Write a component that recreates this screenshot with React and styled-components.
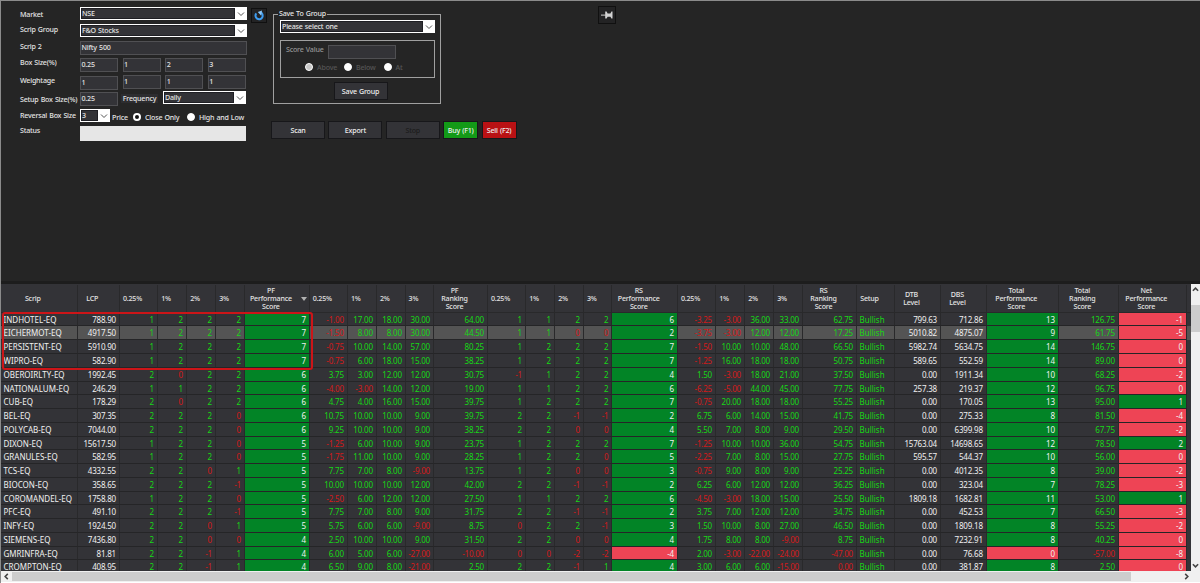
import React, { useState } from 'react';
import styled, { createGlobalStyle } from 'styled-components';

const GlobalStyle = createGlobalStyle`
    *{ box-sizing:border-box; }
    body{
        margin:0;
        background:#252525;
        font-family:"Noto Sans","Open Sans",sans-serif;
        font-size:7.1px;
        font-weight:500;
        letter-spacing:-0.2px;
        word-spacing:0.5px;
        line-height:12px;
        color:#e4e4e4;
        overflow:hidden;
    }
`;
const Window = styled.div`
    width:1200px;
    height:583px;
    display:flex;
    flex-direction:column;
    border-top:1px solid #8b8b8b;
    border-left:1px solid #8b8b8b;
    background:#252525;
    overflow:hidden;
`;
const TopPanel = styled.div`
    height:280px;
    display:flex;
    align-items:flex-start;
    padding-left:19px;
`;
const Form = styled.div`
    width:227px;
    padding-top:6px;
`;
const Line = styled.div`
    display:flex;
    align-items:flex-start;
    height:${p => p.$h || 17}px;
`;
const Label = styled.div`
    width:60px;
    flex:none;
    white-space:nowrap;
    margin-top:${p => p.$shift || 0}px;
`;
const Input = styled.div`
    width:${p => p.$w}px;
    height:14px;
    flex:none;
    margin-top:${p => p.$shift || 0}px;
    margin-right:${p => p.$gap || 0}px;
    padding-left:0.5px;
    line-height:10.5px;
    background:#333337;
    border:1px solid #505053;
`;
const ComboBox = styled.div`
    width:${p => p.$w}px;
    height:13px;
    flex:none;
    display:flex;
    padding:1px;
    background:#fff;
`;
const ComboText = styled.div`
    flex:1;
    line-height:9px;
    background:#333337;
    border:1px solid #1f1f24;
    white-space:nowrap;
`;
const ComboArrow = styled.div`
    width:11px;
    display:flex;
    align-items:center;
    justify-content:center;
`;
const FrequencyLabel = styled.div`
    width:37px;
    height:9px;
    margin:3px 5px 0 3px;
    line-height:9px;
    text-align:center;
    background:#2d2d30;
`;
const PriceRow = styled.div`
    display:flex;
    align-items:center;
    height:12px;
    margin-top:2px;
    padding-left:2px;
    white-space:nowrap;
`;
const PriceText = styled.span`
    width:21px;
`;
const Radio = styled.span`
    width:8px;
    height:8px;
    flex:none;
    border-radius:50%;
    border:${p => p.$checked ? 2 : 1}px solid #fff;
    background:${p => p.$fill || '#fff'};
`;
const RadioText = styled.span`
    width:${p => p.$w}px;
    padding-left:4px;
    color:${p => p.$dim ? '#555' : '#e4e4e4'};
`;
const StatusBar = styled.div`
    width:166px;
    height:15px;
    background:#e6e6e6;
`;
const IconButton = styled.button`
    width:${p => p.$w}px;
    height:${p => p.$h}px;
    margin:${p => p.$margin};
    padding:0;
    display:flex;
    align-items:center;
    justify-content:center;
    background:#232324;
    border:1px solid #101010;
`;
const Middle = styled.div`
    width:327px;
    padding-top:7px;
`;
const GroupBox = styled.fieldset`
    width:168px;
    height:96px;
    margin:0 0 0 2px;
    padding:0 6px;
    border:1px solid #a0a0a0;
    min-width:0;
`;
const Legend = styled.legend`
    height:12px;
    margin-left:-2px;
    padding:0 1px;
    line-height:11px;
    white-space:nowrap;
`;
const ScoreBox = styled.div`
    width:155px;
    height:38px;
    margin-top:7px;
    padding:4px 0 0 5px;
    border:1px solid #a0a0a0;
    color:#969696;
`;
const ScoreLine = styled.div`
    display:flex;
    line-height:9px;
`;
const ScoreLabel = styled.span`
    width:42px;
`;
const RadioLine = styled.div`
    display:flex;
    align-items:center;
    height:12px;
    margin-top:2px;
    padding-left:19px;
`;
const Button = styled.button`
    width:${p => p.$w || 54}px;
    height:18px;
    padding:0;
    font:inherit;
    letter-spacing:inherit;
    word-spacing:inherit;
    line-height:13px;
    color:${p => p.disabled ? '#1c1c1c' : '#f0f0f0'};
    background:${p => p.$color || '#333337'};
    border:1px solid #17171a;
`;
const SaveButton = styled(Button)`
    display:block;
    margin:4px 0 0 53.5px;
`;
const Actions = styled.div`
    display:flex;
    gap:3.4px;
    margin-top:17px;
`;

const TablePanel = styled.div`
    height:290px;
    display:flex;
    position:relative;
    background:#333337;
    border-top:3px solid #1d1d1d;
`;
const Table = styled.div`
    width:1190px;
    height:287px;
    overflow:hidden;
`;
const columns = '76.5px 42.5px 38px 29px 29px 29px 64.8px 38px 29px 29px 28.2px 54px 38px 29px 29px 28.5px 65.5px 38px 29px 29px 29px 54px 38px 46px 45.8px 72px 60px 68px 4.5px';
const Header = styled.div`
    display:grid;
    grid-template-columns:${columns};
    height:28.7px;
    padding-top:1px;
    border-bottom:1px solid #29292b;
`;
const HeaderCell = styled.div`
    display:flex;
    align-items:center;
    justify-content:center;
    position:relative;
    padding-right:12px;
    line-height:8.2px;
    text-align:center;
    white-space:pre;
    border-right:1px solid #29292b;
`;
const SortArrow = styled.svg`
    position:absolute;
    right:2px;
    top:12px;
`;
const Row = styled.div`
    display:grid;
    grid-template-columns:${columns};
    grid-template-rows:13.77px;
    height:13.77px;
    background:${p => p.$selected ? '#545454' : '#333337'};
`;
const tones = {
    up:'#16d816',
    down:'#d41a1a',
    plain:'#f0f0f0',
};
const fills = {
    green:'#028426',
    red:'#ee4455',
};
const Cell = styled.div`
    padding:0 3px 0 ${p => p.$left ? 2.5 : 0}px;
    font-size:8px;
    font-weight:400;
    letter-spacing:${p => p.$left ? 0 : -0.2}px;
    line-height:14px;
    text-align:${p => p.$left ? 'left' : 'right'};
    color:${p => tones[p.$tone]};
    background:${p => fills[p.$fill] || 'transparent'};
    border-right:1px solid #29292b;
    border-bottom:1px solid #252527;
    white-space:nowrap;
`;
const Highlight = styled.div`
    position:absolute;
    left:1px;
    top:28px;
    width:311px;
    height:58px;
    border:2px solid #cc1518;
    border-radius:3px;
`;
const VerticalBar = styled.div`
    width:9px;
    height:287px;
    display:flex;
    flex-direction:column;
    align-items:center;
    padding:2px 0;
    background:#f0f0f0;
`;
const VerticalThumb = styled.div`
    width:9px;
    height:27px;
    margin-top:12px;
    margin-bottom:auto;
    background:#cdcdcd;
`;
const HorizontalBar = styled.div`
    height:12px;
    display:flex;
    align-items:center;
    padding:0 10px 0 2px;
    background:#f0f0f0;
    border-bottom:1px solid #fff;
`;
const HorizontalThumb = styled.div`
    width:1119px;
    height:9px;
    margin-left:2px;
    margin-right:auto;
    background:#cdcdcd;
`;

const chevrons = {
    down:'M1 2.5 L4 5.5 L7 2.5',
    up:'M1 5.5 L4 2.5 L7 5.5',
    left:'M5.5 1 L2.5 4 L5.5 7',
    right:'M2.5 1 L5.5 4 L2.5 7',
};
const Chevron = ({dir,size=7,color='#444',weight=1.8}) => (
    <svg width={size} height={size} viewBox="0 0 8 8" fill="none" stroke={color} strokeWidth={weight}>
        <path d={chevrons[dir]}/>
    </svg>
);

const Combo = ({width,children}) => (
    <ComboBox $w={width}>
        <ComboText>{children}</ComboText>
        <ComboArrow><Chevron dir="down" size={8} color="#555" weight={1}/></ComboArrow>
    </ComboBox>
);

const headers = [
    'Scrip','LCP','0.25%','1%','2%','3%','PF\nPerformance\nScore',
    '0.25%','1%','2%','3%','PF\nRanking\nScore',
    '0.25%','1%','2%','3%','RS\nPerformance\nScore',
    '0.25%','1%','2%','3%','RS\nRanking\nScore',
    'Setup','DTB\nLevel','DBS\nLevel','Total\nPerformance\nScore','Total\nRanking\nScore','Net\nPerformance\nScore','',
];

const rows = `INDHOTEL-EQ 788.90 1 2 2 2 7 -1.00 17.00 18.00 30.00 64.00 1 1 2 2 6 -3.25 -3.00 36.00 33.00 62.75 Bullish 799.63 712.86 13 126.75 -1
EICHERMOT-EQ 4917.50 1 2 2 2 7 -1.50 8.00 8.00 30.00 44.50 1 1 0 0 2 -3.75 -3.00 12.00 12.00 17.25 Bullish 5010.82 4875.07 9 61.75 -5
PERSISTENT-EQ 5910.90 1 2 2 2 7 -0.75 10.00 14.00 57.00 80.25 1 2 2 2 7 -1.50 10.00 10.00 48.00 66.50 Bullish 5982.74 5634.75 14 146.75 0
WIPRO-EQ 582.90 1 2 2 2 7 -0.75 6.00 18.00 15.00 38.25 1 2 2 2 7 -1.25 16.00 18.00 18.00 50.75 Bullish 589.65 552.59 14 89.00 0
OBEROIRLTY-EQ 1992.45 2 0 2 2 6 3.75 3.00 12.00 12.00 30.75 -1 1 2 2 4 1.50 -3.00 18.00 21.00 37.50 Bullish 0.00 1911.34 10 68.25 -2
NATIONALUM-EQ 246.29 1 1 2 2 6 -4.00 -3.00 14.00 12.00 19.00 1 1 2 2 6 -6.25 -5.00 44.00 45.00 77.75 Bullish 257.38 219.37 12 96.75 0
CUB-EQ 178.29 2 0 2 2 6 4.75 4.00 16.00 15.00 39.75 1 2 2 2 7 -0.75 20.00 18.00 18.00 55.25 Bullish 0.00 170.05 13 95.00 1
BEL-EQ 307.35 2 2 2 0 6 10.75 10.00 10.00 9.00 39.75 2 2 -1 -1 2 6.75 6.00 14.00 15.00 41.75 Bullish 0.00 275.33 8 81.50 -4
POLYCAB-EQ 7044.00 2 2 2 0 6 9.25 10.00 10.00 9.00 38.25 2 2 0 0 4 5.50 7.00 8.00 9.00 29.50 Bullish 0.00 6399.98 10 67.75 -2
DIXON-EQ 15617.50 1 2 2 0 5 -1.25 6.00 10.00 9.00 23.75 1 2 2 2 7 -1.25 10.00 10.00 36.00 54.75 Bullish 15763.04 14698.65 12 78.50 2
GRANULES-EQ 582.95 1 2 2 0 5 -1.75 11.00 10.00 9.00 28.25 1 2 2 0 5 -2.25 7.00 8.00 15.00 27.75 Bullish 595.57 544.37 10 56.00 0
TCS-EQ 4332.55 2 2 0 1 5 7.75 7.00 8.00 -9.00 13.75 1 2 0 0 3 -0.75 9.00 8.00 9.00 25.25 Bullish 0.00 4012.35 8 39.00 -2
BIOCON-EQ 358.65 2 2 2 -1 5 10.00 10.00 10.00 12.00 42.00 2 2 -1 -1 2 6.25 6.00 12.00 12.00 36.25 Bullish 0.00 323.04 7 78.25 -3
COROMANDEL-EQ 1758.80 1 2 2 0 5 -2.50 6.00 12.00 12.00 27.50 1 1 2 2 6 -4.50 -3.00 18.00 15.00 25.50 Bullish 1809.18 1682.81 11 53.00 1
PFC-EQ 491.10 2 2 2 -1 5 7.75 7.00 8.00 9.00 31.75 2 2 -1 -1 2 3.75 7.00 12.00 12.00 34.75 Bullish 0.00 452.53 7 66.50 -3
INFY-EQ 1924.50 2 2 0 1 5 5.75 6.00 6.00 -9.00 8.75 0 2 2 -1 3 1.50 10.00 8.00 27.00 46.50 Bullish 0.00 1809.18 8 55.25 -2
SIEMENS-EQ 7436.80 2 2 0 0 4 2.50 10.00 10.00 9.00 31.50 2 2 0 0 4 1.75 8.00 8.00 -9.00 8.75 Bullish 0.00 7232.91 8 40.25 0
GMRINFRA-EQ 81.81 2 2 -1 1 4 6.00 5.00 6.00 -27.00 -10.00 0 0 -2 -2 -4 2.00 -3.00 -22.00 -24.00 -47.00 Bullish 0.00 76.68 0 -57.00 -8
CROMPTON-EQ 408.95 2 2 -1 1 4 6.50 9.00 8.00 -21.00 2.50 2 2 -1 1 4 3.00 6.00 6.00 -15.00 0.00 Bullish 0.00 381.87 8 2.50 0`
    .split('\n').map(line => line.split(' '));

const plainColumns = [0,1,23,24];
const filledColumns = [6,16,25,27];

const ScripCell = ({value,index}) => {
    const filled = filledColumns.includes(index);
    const positive = index === 22 || Number(value) > 0;
    const tone = filled || plainColumns.includes(index) ? 'plain' : positive ? 'up' : 'down';
    const fill = filled ? (positive ? 'green' : 'red') : undefined;
    return <Cell $tone={tone} $fill={fill} $left={index === 0 || index === 22}>{value}</Cell>;
};

const ScanForm = () => (
    <Form>
        <Line><Label $shift={1}>Market</Label><Combo width={167}>NSE</Combo></Line>
        <Line><Label $shift={-1}>Scrip Group</Label><Combo width={167}>F&amp;O Stocks</Combo></Line>
        <Line><Label $shift={-1}>Scrip 2</Label><Input $w={167}>Nifty 500</Input></Line>
        <Line>
            <Label $shift={-2}>Box Size(%)</Label>
            {['0.25','1','2','3'].map(v => <Input key={v} $w={38} $gap={4.6}>{v}</Input>)}
        </Line>
        <Line $h={16}>
            <Label $shift={-1}>Weightage</Label>
            {[1,0,0,0].map((shift,i) => <Input key={i} $w={38} $gap={4.6} $shift={shift}>1</Input>)}
        </Line>
        <Line $h={18}>
            <Label $shift={2}>Setup Box Size(%)</Label>
            <Input $w={38} $shift={1}>0.25</Input>
            <FrequencyLabel>Frequency</FrequencyLabel>
            <Combo width={83}>Daily</Combo>
        </Line>
        <Line>
            <Label>Reversal Box Size</Label>
            <Combo width={30}>3</Combo>
            <PriceRow>
                <PriceText>Price</PriceText>
                <Radio $checked $fill="#111"/>
                <RadioText $w={46}>Close Only</RadioText>
                <Radio/>
                <RadioText $w={52}>High and Low</RadioText>
            </PriceRow>
        </Line>
        <Line><Label $shift={-2}>Status</Label><StatusBar/></Line>
    </Form>
);

const SaveToGroup = () => (
    <GroupBox>
        <Legend>Save To Group</Legend>
        <Combo width={155}>Please select one</Combo>
        <ScoreBox>
            <ScoreLine><ScoreLabel>Score Value</ScoreLabel><Input $w={68}/></ScoreLine>
            <RadioLine>
                <Radio $fill="#c8c8c8"/><RadioText $dim $w={31}>Above</RadioText>
                <Radio/><RadioText $dim $w={31.5}>Below</RadioText>
                <Radio/><RadioText $dim $w={20}>At</RadioText>
            </RadioLine>
        </ScoreBox>
        <SaveButton>Save Group</SaveButton>
    </GroupBox>
);

const App = () => {
    const [selected,setSelected] = useState(1);
    return (
        <Window>
            <GlobalStyle/>
            <TopPanel>
                <ScanForm/>
                <IconButton $w={16} $h={15} $margin="7px 4px 0 4px">
                    <svg width="11" height="11" viewBox="0 0 11 11">
                        <path d="M2.3 3.4 A3.6 3.6 0 1 0 6.6 2.4" fill="none" stroke="#3d9cf0" strokeWidth="2"/>
                        <path d="M8 0.4 L7.2 5.8 L3.8 2 Z" fill="#8cc8fa"/>
                    </svg>
                </IconButton>
                <Middle>
                    <SaveToGroup/>
                    <Actions>
                        <Button>Scan</Button>
                        <Button>Export</Button>
                        <Button disabled>Stop</Button>
                        <Button $w={35} $color="#139a17">Buy (F1)</Button>
                        <Button $w={35} $color="#b91114">Sell (F2)</Button>
                    </Actions>
                </Middle>
                <IconButton $w={18} $h={18} $margin="5px 0 0 0">
                    <svg width="12" height="10" viewBox="0 0 12 10" fill="#d2d2d2">
                        <path d="M0 4.6H5V5.6H0Z"/>
                        <path d="M4.2 1.5H5.6L6.6 3.5H9.4L10.4 1.5H11.5V8.5H10.4L9.4 6.7H6.6L5.6 8.5H4.2Z"/>
                    </svg>
                </IconButton>
            </TopPanel>
            <TablePanel>
                <Table>
                    <Header>
                        {headers.map((title,index) => (
                            <HeaderCell key={index}>
                                {title}
                                {index === 6 && <SortArrow width="6" height="4"><path d="M0 0H6L3 4Z" fill="#b0b0b0"/></SortArrow>}
                            </HeaderCell>
                        ))}
                    </Header>
                    {rows.map((row,rowIndex) => (
                        <Row key={row[0]} $selected={rowIndex === selected} onClick={() => setSelected(rowIndex)}>
                            {row.map((value,index) => <ScripCell key={index} value={value} index={index}/>)}
                        </Row>
                    ))}
                </Table>
                <VerticalBar>
                    <Chevron dir="up"/>
                    <VerticalThumb/>
                    <Chevron dir="down"/>
                </VerticalBar>
                <Highlight/>
            </TablePanel>
            <HorizontalBar>
                <Chevron dir="left"/>
                <HorizontalThumb/>
                <Chevron dir="right"/>
            </HorizontalBar>
        </Window>
    );
};

export default App;
